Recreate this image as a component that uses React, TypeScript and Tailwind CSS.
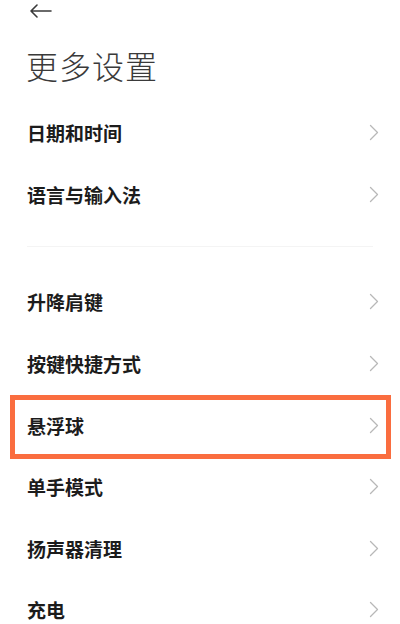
const groupOne = ["日期和时间", "语言与输入法"];
const groupTwo = ["升降肩键", "按键快捷方式", "悬浮球", "单手模式", "扬声器清理", "充电"];

const font = { fontFamily: '"Noto Sans CJK SC", "Noto Sans", sans-serif' };

function Row({ label, marked }: { label: string; marked?: boolean }) {
	return (
		<div className="relative flex items-center justify-between h-[61.6px] pl-[27px] pr-[21px]">
			<span className="text-[19px] font-bold text-[#1c1c1c] leading-none">{label}</span>
			<svg width="10" height="17" viewBox="0 0 10 17" fill="none" stroke="#b8b8b8" strokeWidth="1.3" strokeLinecap="round" strokeLinejoin="round">
				<path d="M1.5 1.5l7 7-7 7" />
			</svg>
			{/* highlight annotation */}
			{marked && (
				<div className="absolute left-[10px] right-[9px] top-[1px] bottom-[-3px] border-[5px] border-[#fa6d3f]" />
			)}
		</div>
	);
}

export default function App() {
	return (
		<main className="w-[400px] h-[624px] bg-white overflow-hidden" style={font}>
			{/* Header */}
			<div className="h-[102px] flex flex-col">
				<div className="pl-[29px] pt-[4px] h-[22px]">
					<svg width="24" height="14" viewBox="0 0 24 14" fill="none" stroke="#3a3a3a" strokeWidth="1.6" strokeLinecap="round" strokeLinejoin="round">
						<path d="M22 7H2M8 1L2 7l6 6" />
					</svg>
				</div>
				<h1 className="pl-[26px] mt-[23px] text-[32px] font-light text-[#3a3a3a] leading-[40px] tracking-[1px]">
					更多设置
				</h1>
			</div>

			{groupOne.map((item) => (
				<Row key={item} label={item} />
			))}

			{/* Section gap */}
			<div className="h-[46px] pt-[21px] px-[27px]">
				<div className="h-px bg-[#f4f4f4]" />
			</div>

			{groupTwo.map((item) => (
				<Row key={item} label={item} marked={item === "悬浮球"} />
			))}
		</main>
	);
}
